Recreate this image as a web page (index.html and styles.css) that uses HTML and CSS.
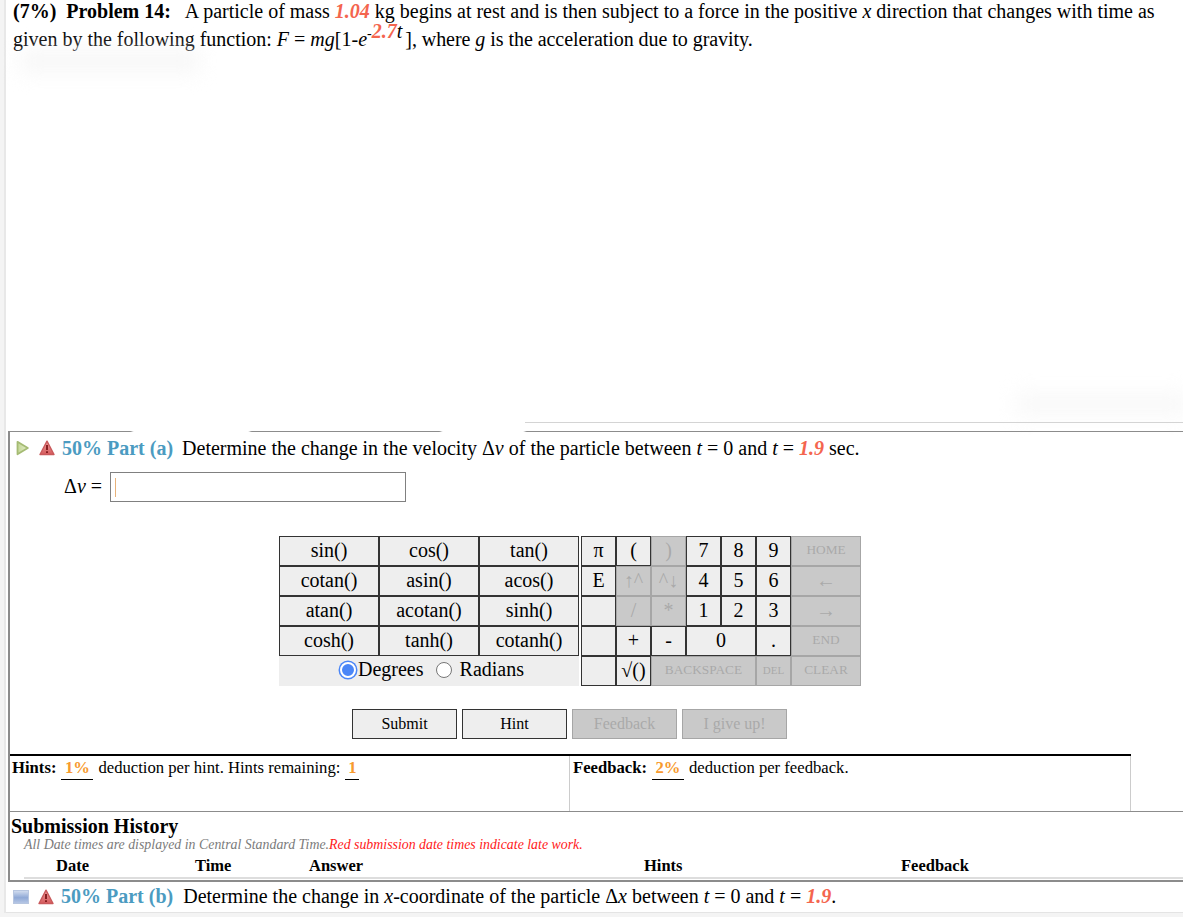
FILE: index.html
```html
<!DOCTYPE html>
<html lang="en">
<head>
<meta charset="utf-8">
<title>Problem 14</title>
<link rel="stylesheet" href="styles.css">
</head>
<body>
<div class="page">
<div class="problem">
  <div class="statement"><b>(7%)&nbsp; Problem 14:</b>&nbsp;&nbsp; A particle of mass <i class="val">1.04</i> kg begins at rest and is then subject to a force in the positive <i>x</i> direction that changes with time as<br>given by the following function: <i>F</i> = <i>mg</i>[1-<i>e</i><sup class="exp"><span class="dash">-</span><i class="val">2.7</i><i>t</i></sup> <span class="tail">], where <i>g</i> is the acceleration due to gravity.</span></div>
  <div class="smudge smudge-a"></div>
  <div class="smudge smudge-b"></div>
</div>
<section class="part-a">
  <div class="wipe wipe-a"></div>
  <div class="wipe wipe-b"></div>
  <h2 class="part-head">
    <svg class="ico play" viewBox="0 0 13 16" width="13" height="16"><defs><linearGradient id="gg" x1="0" y1="0" x2="1" y2="0"><stop offset="0" stop-color="#c3d795"/><stop offset="1" stop-color="#e4eccb"/></linearGradient></defs><path d="M1.5 1.8 L11.8 8 L1.5 14.2 Z" fill="url(#gg)" stroke="#a5bb74" stroke-width="1.8" stroke-linejoin="round"/></svg>
    <svg class="ico warn" viewBox="0 0 16 16" width="16" height="16"><defs><linearGradient id="rg" x1="0" y1="0" x2="0" y2="1"><stop offset="0" stop-color="#ec9c9c"/><stop offset="1" stop-color="#d55a5c"/></linearGradient></defs><path d="M8 1.2 L15 14.5 H1 Z" fill="url(#rg)" stroke="#c9595b" stroke-width="1.4" stroke-linejoin="round"/><path d="M8 5 V10 M8 11.2 V13" stroke="#7d1518" stroke-width="1.8"/></svg>
    <span class="pct">50% Part (a)</span>
    <span class="q">Determine the change in the velocity Δ<i>v</i> of the particle between <i>t</i> = 0 and <i>t</i> = <i class="val">1.9</i> sec.</span>
  </h2>
  <div class="answer"><label class="ans-label">Δ<i>v</i> =</label><div class="ans-box"><span class="caret"></span></div></div>
  <div class="calc">
    <div class="funcs">
      <div class="key">sin()</div><div class="key">cos()</div><div class="key">tan()</div>
      <div class="key">cotan()</div><div class="key">asin()</div><div class="key">acos()</div>
      <div class="key">atan()</div><div class="key">acotan()</div><div class="key">sinh()</div>
      <div class="key">cosh()</div><div class="key">tanh()</div><div class="key">cotanh()</div>
      <div class="modes"><span class="radio on"></span>Degrees<span class="radio off"></span>Radians</div>
    </div>
    <div class="pad">
      <div class="key">π</div><div class="key">(</div><div class="key off">)</div><div class="key">7</div><div class="key">8</div><div class="key">9</div><div class="key off wide small">HOME</div>
      <div class="key">E</div><div class="key off">↑^</div><div class="key off">^↓</div><div class="key">4</div><div class="key">5</div><div class="key">6</div><div class="key off wide">←</div>
      <div class="key"></div><div class="key off">/</div><div class="key off">*</div><div class="key">1</div><div class="key">2</div><div class="key">3</div><div class="key off wide">→</div>
      <div class="key"></div><div class="key">+</div><div class="key">-</div><div class="key wide">0</div><div class="key">.</div><div class="key off wide small">END</div>
      <div class="key"></div><div class="key">√()</div><div class="key off wide3 small">BACKSPACE</div><div class="key off tiny">DEL</div><div class="key off wide small">CLEAR</div>
    </div>
  </div>
  <div class="actions">
    <div class="btn">Submit</div><div class="btn">Hint</div><div class="btn off">Feedback</div><div class="btn off">I give up!</div>
  </div>
  <div class="hints">
    <div class="hint-cell left"><b>Hints:</b><span class="under">1%</span>deduction per hint. Hints remaining:<span class="under narrow">1</span></div>
    <div class="hint-cell right"><b>Feedback:</b><span class="under">2%</span>deduction per feedback.</div>
  </div>
  <div class="history">
    <h3 class="hist-title">Submission History</h3>
    <p class="hist-note">All Date times are displayed in Central Standard Time.<span class="late">Red submission date times indicate late work.</span></p>
    <div class="hist-cols"><b class="c1">Date</b><b class="c2">Time</b><b class="c3">Answer</b><b class="c4">Hints</b><b class="c5">Feedback</b></div>
  </div>
</section>
<section class="part-b">
  <svg class="ico square" viewBox="0 0 16 14" width="16" height="14"><defs><linearGradient id="g" x1="0" y1="0" x2="0" y2="1"><stop offset="0" stop-color="#d5dff0"/><stop offset=".55" stop-color="#8fa9d6"/><stop offset="1" stop-color="#b9c9e6"/></linearGradient></defs><rect x=".5" y=".5" width="15" height="13" fill="url(#g)" stroke="#b7c6e0"/></svg>
  <svg class="ico warn" viewBox="0 0 16 16" width="16" height="16"><path d="M8 1.2 L15 14.5 H1 Z" fill="url(#rg)" stroke="#c9595b" stroke-width="1.4" stroke-linejoin="round"/><path d="M8 5 V10 M8 11.2 V13" stroke="#7d1518" stroke-width="1.8"/></svg>
  <span class="pct">50% Part (b)</span>
  <span class="q">Determine the change in <i>x</i>-coordinate of the particle Δ<i>x</i> between <i>t</i> = 0 and <i>t</i> = <i class="val">1.9</i>.</span>
</section>
</div>
</body>
</html>
```
FILE: styles.css
```css
* { box-sizing: border-box; }
html, body { margin: 0; padding: 0; }
body {
  width: 1183px; height: 917px; overflow: hidden;
  background: #f4f4f4; color: #000;
  font-family: "Liberation Serif", "Times New Roman", serif;
  font-size: 20px;
}
.page { height: 913px; margin-left: 4px; border-left: 2px solid #e8e8e8; background: #fff; padding-top: 1px; }
.problem { height: 426px; padding: 0 0 0 7px; position: relative; }
.problem::after { content: ""; position: absolute; left: 519px; right: 0; bottom: 0; height: 1px; background: #d4d4d4; }
.statement { line-height: 28px; margin-top: -4px; white-space: nowrap; }
.val { color: #f4654e; font-weight: bold; }
.exp { font-size: 20px; line-height: 0; vertical-align: 8px; margin-right: -2px; }
.dash { font-size: 14px; }
.tail { letter-spacing: -.05px; }
.smudge { position: absolute; background: #f2f2f2; filter: blur(10px); }
.smudge-a { left: 14px; top: 52px; width: 180px; height: 24px; opacity: .6; }
.smudge-b { left: 1010px; top: 395px; width: 170px; height: 24px; opacity: .5; }
.part-a {
  margin: 8px 0 0 2px; height: 451px; position: relative;
  border-left: 2px solid #8c8c8c; border-top: 1px solid #8c8c8c; border-bottom: 2px solid #8c8c8c;
}
.wipe { position: absolute; top: -3px; height: 5px; background: #fff; filter: blur(1px); }
.wipe-a { left: 122px; width: 118px; }
.wipe-b { left: 431px; width: 84px; }
.part-head { margin: 0; padding: 0 0 0 4px; height: 32px; font-size: inherit; font-weight: normal; display: flex; align-items: center; white-space: nowrap; }
.ico { flex: none; display: block; }
.play { margin-left: 2px; }
.warn { margin-left: 10px; }
.pct { color: #4b9bc1; font-weight: bold; margin-left: 7px; }
.q { margin-left: 9px; }
.answer { display: flex; align-items: center; height: 30px; margin-top: 8px; padding-left: 54px; }
.ans-label { width: 46px; padding-bottom: 2px; }
.ans-box { width: 296px; height: 30px; border: 1px solid #808080; padding: 5px 4px; }
.caret { display: block; width: 1px; height: 19px; background: #e8b27a; }
.calc { display: flex; margin: 34px 0 0 269px; }
.funcs { display: grid; grid-template-columns: repeat(3, 100px); grid-auto-rows: 30px; width: 300px; height: 150px; }
.pad { display: grid; grid-template-columns: repeat(8, 35px); grid-auto-rows: 30px; margin-left: 2px; width: 280px; height: 150px; }
.key { background: #eee; border: 1px solid #333; display: flex; align-items: center; justify-content: center; white-space: nowrap; overflow: hidden; padding-bottom: 2px; }
.key.off { background: #c9c9c9; border-color: #a6a6a6; color: #a9a9a9; }
.wide { grid-column: span 2; }
.wide3 { grid-column: span 3; }
.small { font-size: 13.33px; }
.tiny { font-size: 11px; }
.modes { grid-column: span 3; background: #eee; display: flex; align-items: center; justify-content: center; padding: 0 0 3px 6px; }
.radio { width: 16px; height: 16px; border-radius: 50%; display: block; flex: none; }
.radio.on { background: #4a86f7; border: 2px solid #fff; box-shadow: 0 0 0 1.5px #4a86f7; margin-right: 2px; }
.radio.off { background: #fff; border: 1px solid #767676; margin: 0 8px 0 12px; }
.actions { display: flex; gap: 5px; margin: 23px 0 0 342px; }
.btn { width: 105px; height: 30px; background: #eee; border: 1px solid #333; font-size: 16px; display: flex; align-items: center; justify-content: center; }
.btn.off { background: #c9c9c9; border-color: #a6a6a6; color: #a9a9a9; }
.hints { display: flex; width: 1121px; height: 57px; margin-top: 15px; border-top: 2px solid #000; font-size: 16.67px; }
.hint-cell { white-space: nowrap; padding-top: 2px; }
.left { width: 560px; padding-left: 2px; border-right: 1px solid #ccc; }
.right { width: 561px; padding-left: 3px; border-right: 1px solid #ccc; }
.under { display: inline-block; color: #f79a2e; font-weight: bold; border-bottom: 1px solid #000; text-align: center; width: 32px; margin: 0 5px 0 5px; line-height: 18px; padding-bottom: 2px; }
.narrow { width: 14px; }
.history { border-top: 1px solid #8c8c8c; }
.hist-title { margin: 0; padding: 3px 0 0 1px; font-size: 20px; line-height: 22px; }
.hist-note { margin: 0; padding-left: 14px; font-size: 13.87px; line-height: 16px; font-style: italic; color: #7b7b7b; }
.late { color: #ff1a1a; }
.hist-cols { display: flex; margin: 3px 0 0 14px; height: 23px; font-size: 16.5px; border-bottom: 2px solid #ddd; width: 1159px; }
.hist-cols b { display: block; flex: none; }
.c1 { width: 140px; padding-left: 32px; }
.c2 { width: 145px; padding-left: 31px; }
.c3 { width: 335px; }
.c4 { width: 257px; }
.part-b { display: flex; align-items: center; height: 31px; padding: 0 0 1px 7px; border-bottom: 1px solid #e4e4e4; white-space: nowrap; }
.part-b .warn { margin-left: 9px; }
.part-b .pct { margin-left: 7px; }
.part-b .q { margin-left: 10px; }
```
